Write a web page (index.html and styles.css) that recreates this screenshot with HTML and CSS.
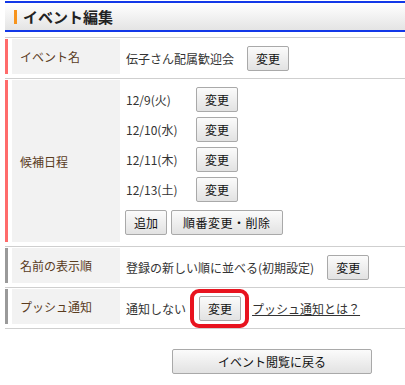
FILE: index.html
```html
<!DOCTYPE html>
<html lang="ja">
<head>
  <meta charset="UTF-8" />
  <title>イベント編集</title>
  <link rel="stylesheet" href="styles.css">
</head>
<body>
  <div class="page">
    <div class="title">
      <h1>イベント編集</h1>
    </div>

    <div class="row">
      <div class="inner red">
        <div class="label">イベント名</div>
        <div class="value">
          <span class="text">伝子さん配属歓迎会</span>
          <button class="btn">変更</button>
        </div>
      </div>
    </div>

    <div class="row">
      <div class="inner red">
        <div class="label">候補日程</div>
        <div class="value dates">
          <div class="date"><span class="day">12/9(火)</span><button class="btn">変更</button></div>
          <div class="date"><span class="day">12/10(水)</span><button class="btn">変更</button></div>
          <div class="date"><span class="day">12/11(木)</span><button class="btn">変更</button></div>
          <div class="date"><span class="day">12/13(土)</span><button class="btn">変更</button></div>
          <div class="actions">
            <button class="btn">追加</button>
            <button class="btn order">順番変更・削除</button>
          </div>
        </div>
      </div>
    </div>

    <div class="row">
      <div class="inner gray">
        <div class="label">名前の表示順</div>
        <div class="value">
          <span class="text">登録の新しい順に並べる(初期設定)</span>
          <button class="btn">変更</button>
        </div>
      </div>
    </div>

    <div class="row">
      <div class="inner gray">
        <div class="label">プッシュ通知</div>
        <div class="value">
          <span class="text">通知しない</span>
          <button class="btn marked">変更</button>
          <a class="help" href="#">プッシュ通知とは？</a>
        </div>
      </div>
    </div>
    <div class="row-end"></div>

    <div class="back">
      <button class="btn wide">イベント閲覧に戻る</button>
    </div>
  </div>
</body>
</html>
```

FILE: styles.css
```css
html, body {
  margin: 0;
  overflow: hidden;
}

body {
  background: #fff;
  color: #333;
  font-family: "Noto Sans CJK JP", "Noto Sans", sans-serif;
  font-size: 12px;
}

.page {
  width: 534px;
  margin-left: 5px;
  padding-top: 1px;
}

.title {
  height: 27px;
  border-top: 2px solid #1238e8;
  border-bottom: 2px solid #1238e8;
  background: linear-gradient(#ffffff, #e4e4e4);
  padding-left: 9px;
  display: flex;
  align-items: center;
  margin-bottom: 5px;
}

.title h1 {
  margin: 0;
  font-size: 15px;
  font-weight: bold;
  color: #222;
  line-height: 14px;
  border-left: 3px solid #f7941d;
  padding-left: 6px;
}

.row {
  border-top: 1px solid #cfcfcf;
  padding: 1px 0 4px;
}

.row-end {
  border-top: 1px solid #cfcfcf;
}

.inner {
  display: flex;
  border-left: 3px solid #ff6b6b;
}

.inner.gray {
  border-left-color: #9a9a9a;
}

.label {
  width: 100px;
  margin-left: 4px;
  padding-left: 8px;
  background: #f2f2f2;
  color: #5a3c1e;
  display: flex;
  align-items: center;
}

.value {
  padding: 7px 0 3px 6px;
  display: flex;
  align-items: center;
}

.value .text {
  margin-right: 13px;
}

.dates {
  flex-direction: column;
  align-items: flex-start;
  padding-bottom: 7px;
}

.date {
  display: flex;
  align-items: center;
  margin-bottom: 5px;
}

.date .day {
  width: 70px;
}

.actions {
  display: flex;
  gap: 4px;
  margin-top: 3px;
  margin-left: -1px;
}

.btn {
  height: 25px;
  padding: 0 8px;
  border: 1px solid #a9a9a9;
  border-radius: 2px;
  background: linear-gradient(#fbfbfb, #e2e2e2);
  color: #111;
  font-family: inherit;
  font-size: 12px;
  line-height: 1;
}

.btn.order {
  padding: 0 11px;
  letter-spacing: 0.5px;
}

.marked {
  position: relative;
}

.marked::after {
  content: "";
  position: absolute;
  top: -8px;
  left: -10px;
  right: -9px;
  bottom: -8px;
  border: 4px solid #e8131f;
  border-radius: 9px;
}

.help {
  margin-left: 11px;
  color: #333;
  text-decoration: underline;
}

.back {
  display: flex;
  justify-content: center;
  margin-top: 20px;
}

.btn.wide {
  width: 200px;
}
```
